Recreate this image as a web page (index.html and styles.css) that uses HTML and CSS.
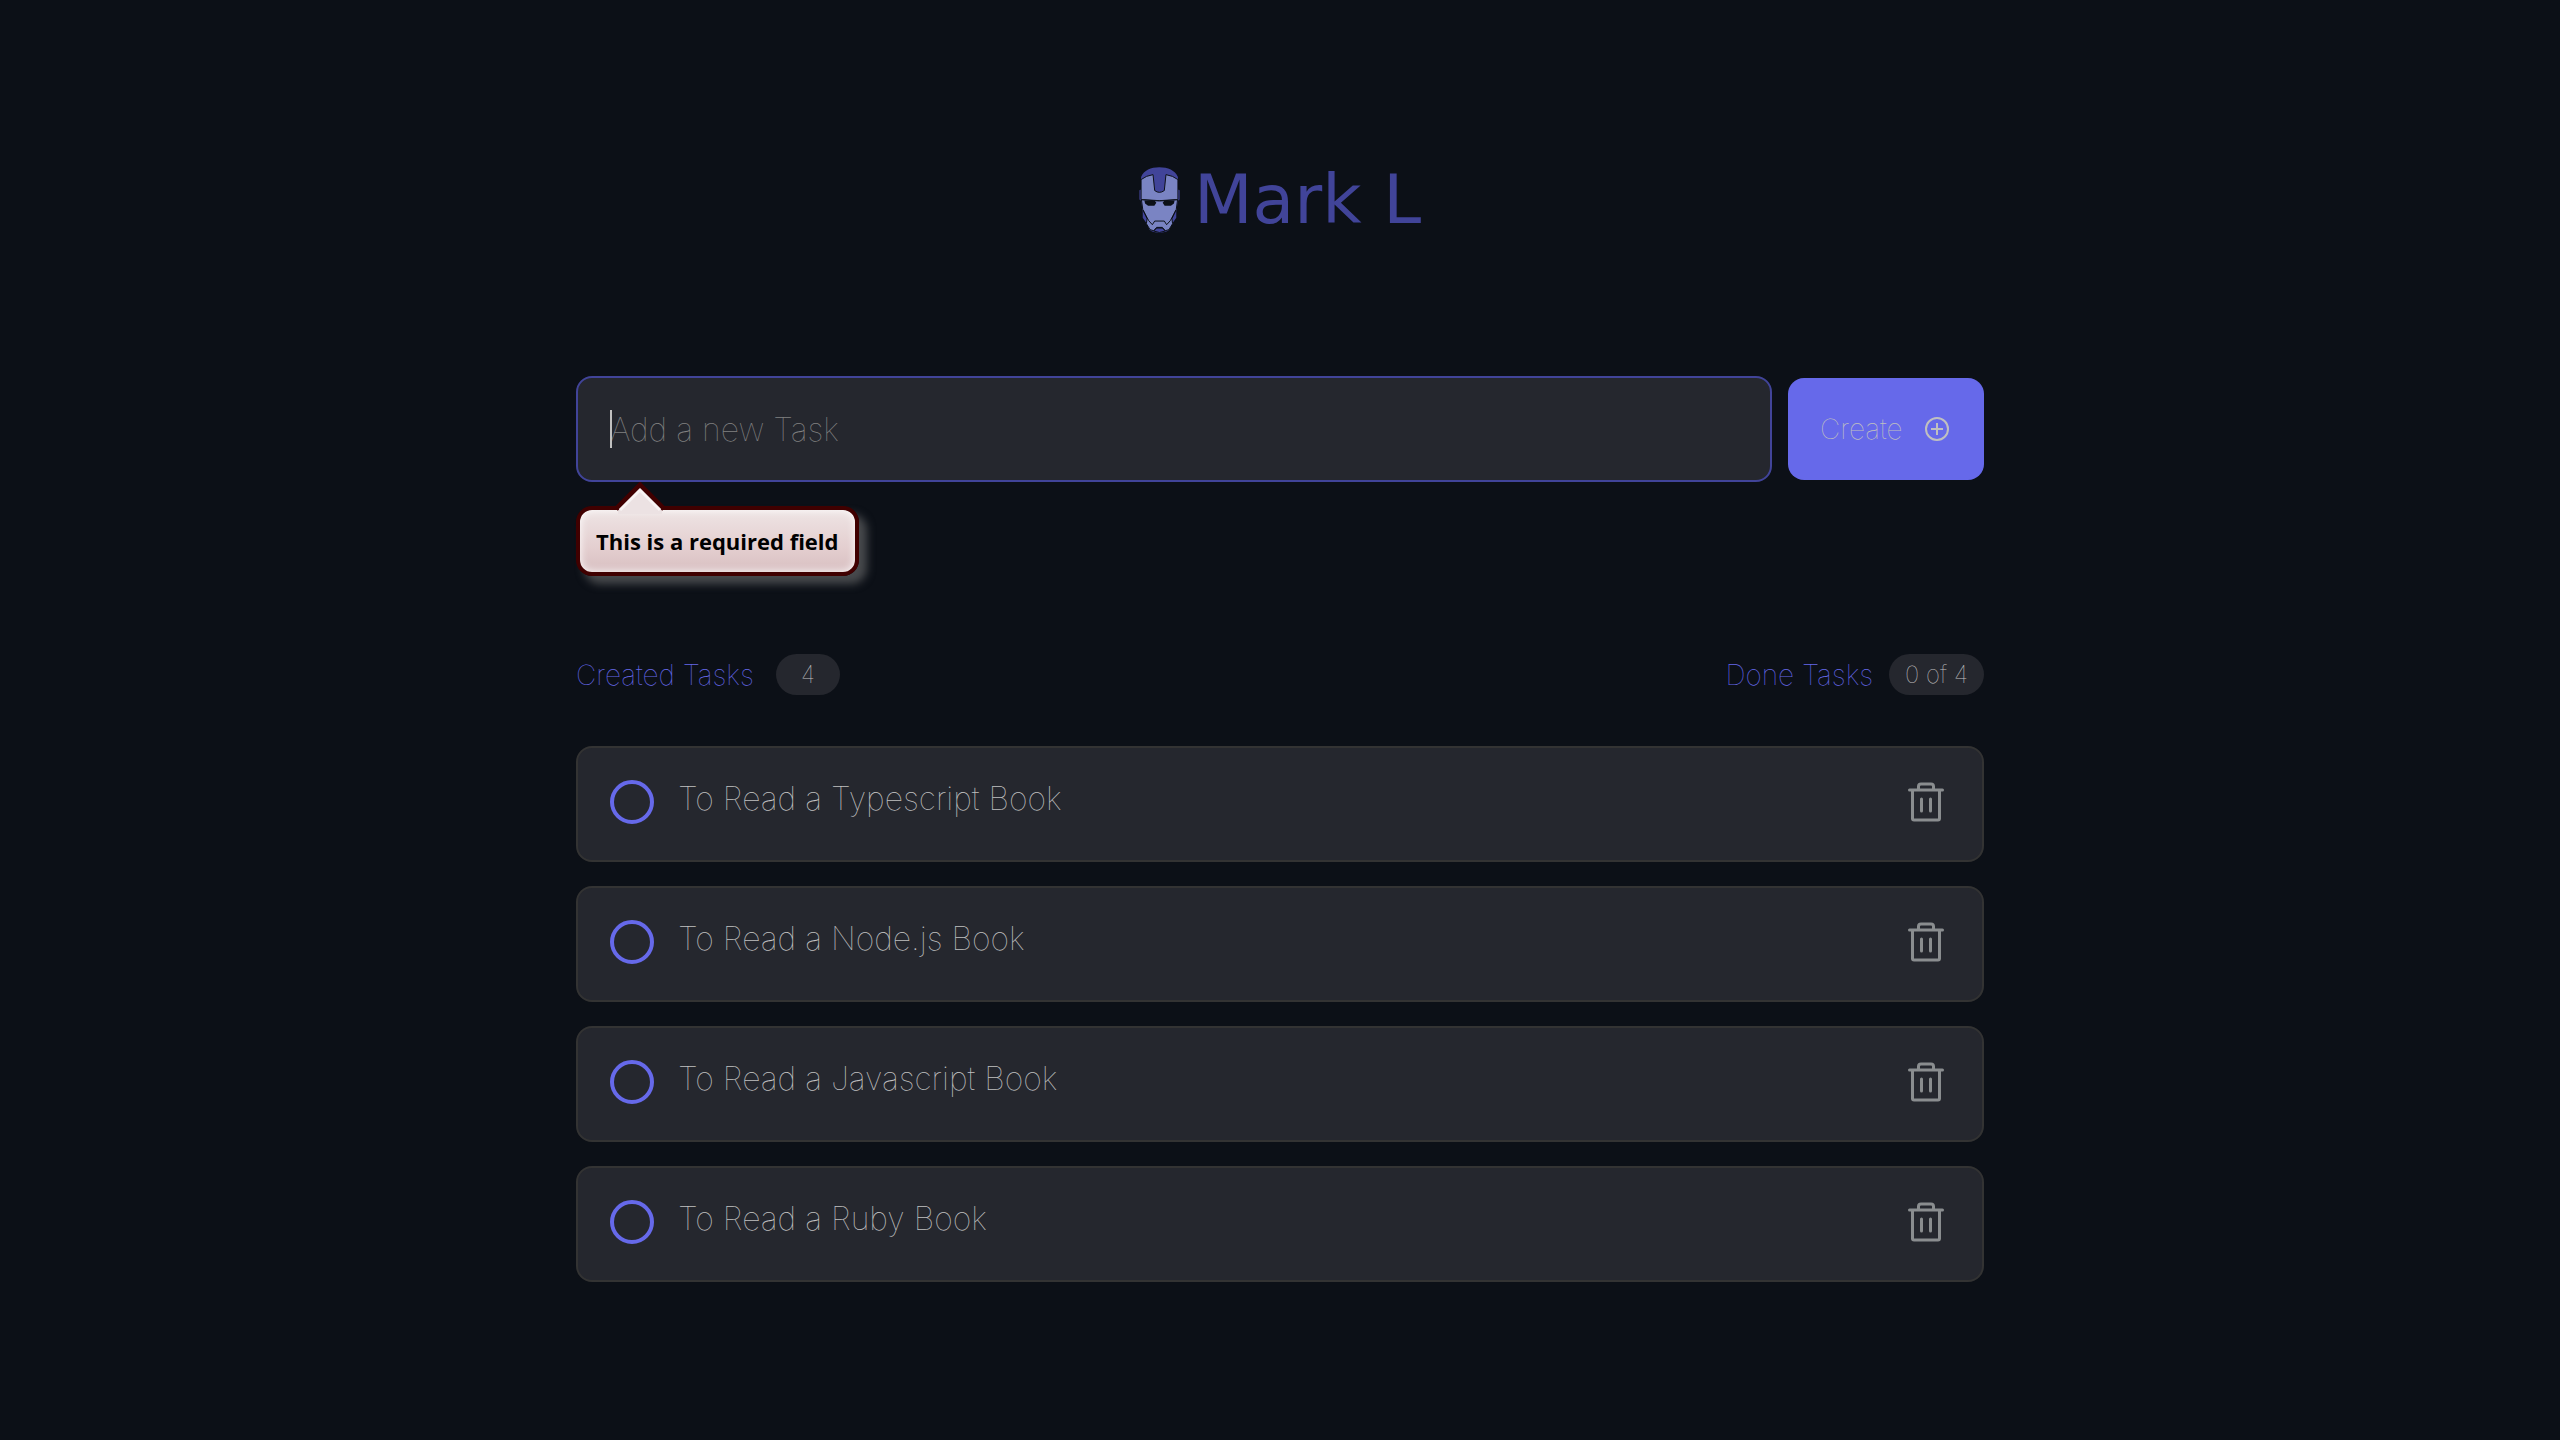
FILE: index.html
```html
<!DOCTYPE html>
<html lang="en">
<head>
<meta charset="utf-8">
<meta name="viewport" content="width=device-width, initial-scale=1">
<title>Mark L</title>
<link rel="stylesheet" href="styles.css">
</head>
<body>
<svg class="sprite" aria-hidden="true">
  <symbol id="trash" viewBox="0 0 36 40">
    <path d="M1.500 8H34.500M4.500 8V36.500Q4.500 38 6 38H30Q31.500 38 31.500 36.500V8M10.500 7V4.500Q10.500 2 13 2H23Q25.500 2 25.500 4.500V7M13.500 17V29M22.500 17V29" fill="none" stroke="currentColor" stroke-width="3" stroke-linecap="round"/>
  </symbol>
</svg>
<header class="brand">
  <svg class="brand-mark" viewBox="51 50 123 199" aria-hidden="true">
    <path d="M57 80C66 60 86 51 112 51S159 60 168 80V118L173 120V148L168 152 163 185V203L150 222 141 240Q130 248 112 248T83 240L75 222 62 203V185L57 152 52 148V120L57 118Z" fill="#414499"/>
    <g fill="#7a84c3" stroke="#0c1017" stroke-width="3" stroke-linejoin="round">
      <path d="M57 88Q72 76 93 73L98 121Q112 132 127 121L132 73Q153 76 168 88V148Q112 155 57 148Z"/>
      <path d="M58 149Q112 156 167 149L163 178 150 206 152 221 141 239 130 242 121 232H104L95 242 84 239 73 221 75 206 62 178Z"/>
      <path d="M63 180L80 212 91 224 98 213H127L134 224 145 212 162 180" fill="none"/>
      <path d="M104 234H121L130 243Q112 252 95 243Z" fill="#414499"/>
    </g>
    <path d="M67 151L98 152 103 158 97 167H78L69 160ZM158 151L127 152 122 158 128 167H147L156 160Z" fill="#0c1017"/>
  </svg>
  <h1 class="brand-name">Mark L</h1>
</header>
<main class="page">
  <form class="new-task">
    <div class="field">
      <input class="task-input" type="text" placeholder="Add a new Task" aria-label="Add a new Task" aria-describedby="task-error">
      <span class="caret" aria-hidden="true"></span>
      <div class="tooltip" id="task-error" role="alert">This is a required field
        <svg class="tooltip-arrow" viewBox="0 0 52 32" aria-hidden="true"><path d="M4 28L26 6 48 28V32H4Z" fill="#ece2e3"/><path d="M2 27L26 3 50 27" fill="none" stroke="#400000" stroke-width="5"/><path d="M6 28L26 8 46 28" fill="none" stroke="#f8f4f4" stroke-width="3"/></svg>
      </div>
    </div>
    <button class="create" type="button">Create
      <svg class="create-icon" viewBox="0 0 24 24" aria-hidden="true"><circle cx="12" cy="12" r="11"/><path d="M12 6V18M6 12H18"/></svg>
    </button>
  </form>
  <section class="tasks">
    <div class="summary">
      <p class="stat"><span class="stat-label">Created Tasks</span> <span class="pill">4</span></p>
      <p class="stat stat-end"><span class="stat-label">Done Tasks</span> <span class="pill">0 of 4</span></p>
    </div>
    <ul class="list">
      <li class="task"><input class="check" type="checkbox" id="t1"><label class="task-name" for="t1">To Read a Typescript Book</label><button class="remove" type="button" aria-label="Delete task"><svg class="trash"><use href="#trash"/></svg></button></li>
      <li class="task"><input class="check" type="checkbox" id="t2"><label class="task-name" for="t2">To Read a Node.js Book</label><button class="remove" type="button" aria-label="Delete task"><svg class="trash"><use href="#trash"/></svg></button></li>
      <li class="task"><input class="check" type="checkbox" id="t3"><label class="task-name" for="t3">To Read a Javascript Book</label><button class="remove" type="button" aria-label="Delete task"><svg class="trash"><use href="#trash"/></svg></button></li>
      <li class="task"><input class="check" type="checkbox" id="t4"><label class="task-name" for="t4">To Read a Ruby Book</label><button class="remove" type="button" aria-label="Delete task"><svg class="trash"><use href="#trash"/></svg></button></li>
    </ul>
  </section>
</main>
</body>
</html>
```
FILE: styles.css
```css
* { box-sizing: border-box; }
body {
  margin: 0;
  min-height: 100vh;
  background: #0c1017;
  color: #c0c0c0;
  font-family: Inter, "Liberation Sans", sans-serif;
  font-weight: 100;
  font-size: 32px;
}
.sprite { display: none; }
.brand {
  display: flex;
  justify-content: center;
  align-items: center;
  gap: 14px;
  padding-top: 160px;
}
.brand-mark { width: 41px; height: 66px; }
.brand-name {
  margin: 0;
  color: #414499;
  font-family: "DejaVu Sans", sans-serif;
  font-size: 68px;
  line-height: 80px;
  font-weight: 400;
}
.page { width: 55%; margin: 136px auto 0; }
.new-task { display: flex; align-items: center; gap: 16px; }
.field { position: relative; flex: 1; }
.task-input {
  display: block;
  width: 100%;
  height: 106px;
  padding: 0 32px;
  border: 2px solid #414499;
  border-radius: 16px;
  outline: none;
  background: #25272e;
  color: #c0c0c0;
  font: inherit;
}
.task-input::placeholder { color: #808080; opacity: 1; }
.caret {
  position: absolute;
  left: 34px;
  top: 34px;
  width: 2px;
  height: 38px;
  background: #c0c0c0;
}
.tooltip {
  position: absolute;
  left: 0;
  top: 130px;
  min-width: 282px;
  padding: 14px 16px;
  border: 4px solid #400000;
  border-radius: 16px;
  background: linear-gradient(#eee4e4, #e4cfd0 60%, #d8bfc1);
  box-shadow: 8px 8px 8px #484a4d, inset 0 0 8px #ffffff;
  color: #000;
  font: 700 22px/34px "Open Sans", "Noto Sans", sans-serif;
  white-space: nowrap;
}
.tooltip-arrow { position: absolute; left: 34px; top: -28px; width: 52px; height: 32px; }
.create {
  display: flex;
  align-items: center;
  justify-content: space-between;
  min-width: 196px;
  height: 102px;
  padding: 0 35px 0 32px;
  border: 0;
  border-radius: 16px;
  background: #6669ea;
  color: #c0c0c0;
  font: inherit;
  font-size: 28px;
}
.create-icon { width: 24px; height: 24px; fill: none; stroke: #c0c0c0; stroke-width: 2; }
.tasks { margin-top: 172px; }
.summary { display: flex; justify-content: space-between; }
.stat {
  display: flex;
  align-items: center;
  gap: 16px;
  margin: 0;
  color: #6669ea;
  font-size: 28px;
  line-height: 40px;
}
.stat-label { min-width: 184px; }
.stat-end .stat-label { text-align: right; }
.pill {
  min-width: 64px;
  padding: 0 16px;
  border-radius: 21px;
  background: #25272e;
  color: #c0c0c0;
  font-size: 24px;
  line-height: 41px;
  text-align: center;
}
.list {
  display: grid;
  gap: 24px;
  margin: 51px 0 0;
  padding: 0;
  list-style: none;
}
.task {
  display: flex;
  align-items: center;
  gap: 24px;
  height: 116px;
  padding: 0 38px 4px 32px;
  border: 2px solid #333333;
  border-radius: 16px;
  background: #25272e;
}
.check {
  appearance: none;
  width: 44px;
  height: 44px;
  margin: 0;
  border: 4px solid #6669ea;
  border-radius: 50%;
}
.task-name { flex: 1; padding-bottom: 6px; line-height: 40px; }
.remove { display: flex; padding: 0; border: 0; background: none; color: #8a8d8f; }
.trash { width: 36px; height: 40px; }
```
